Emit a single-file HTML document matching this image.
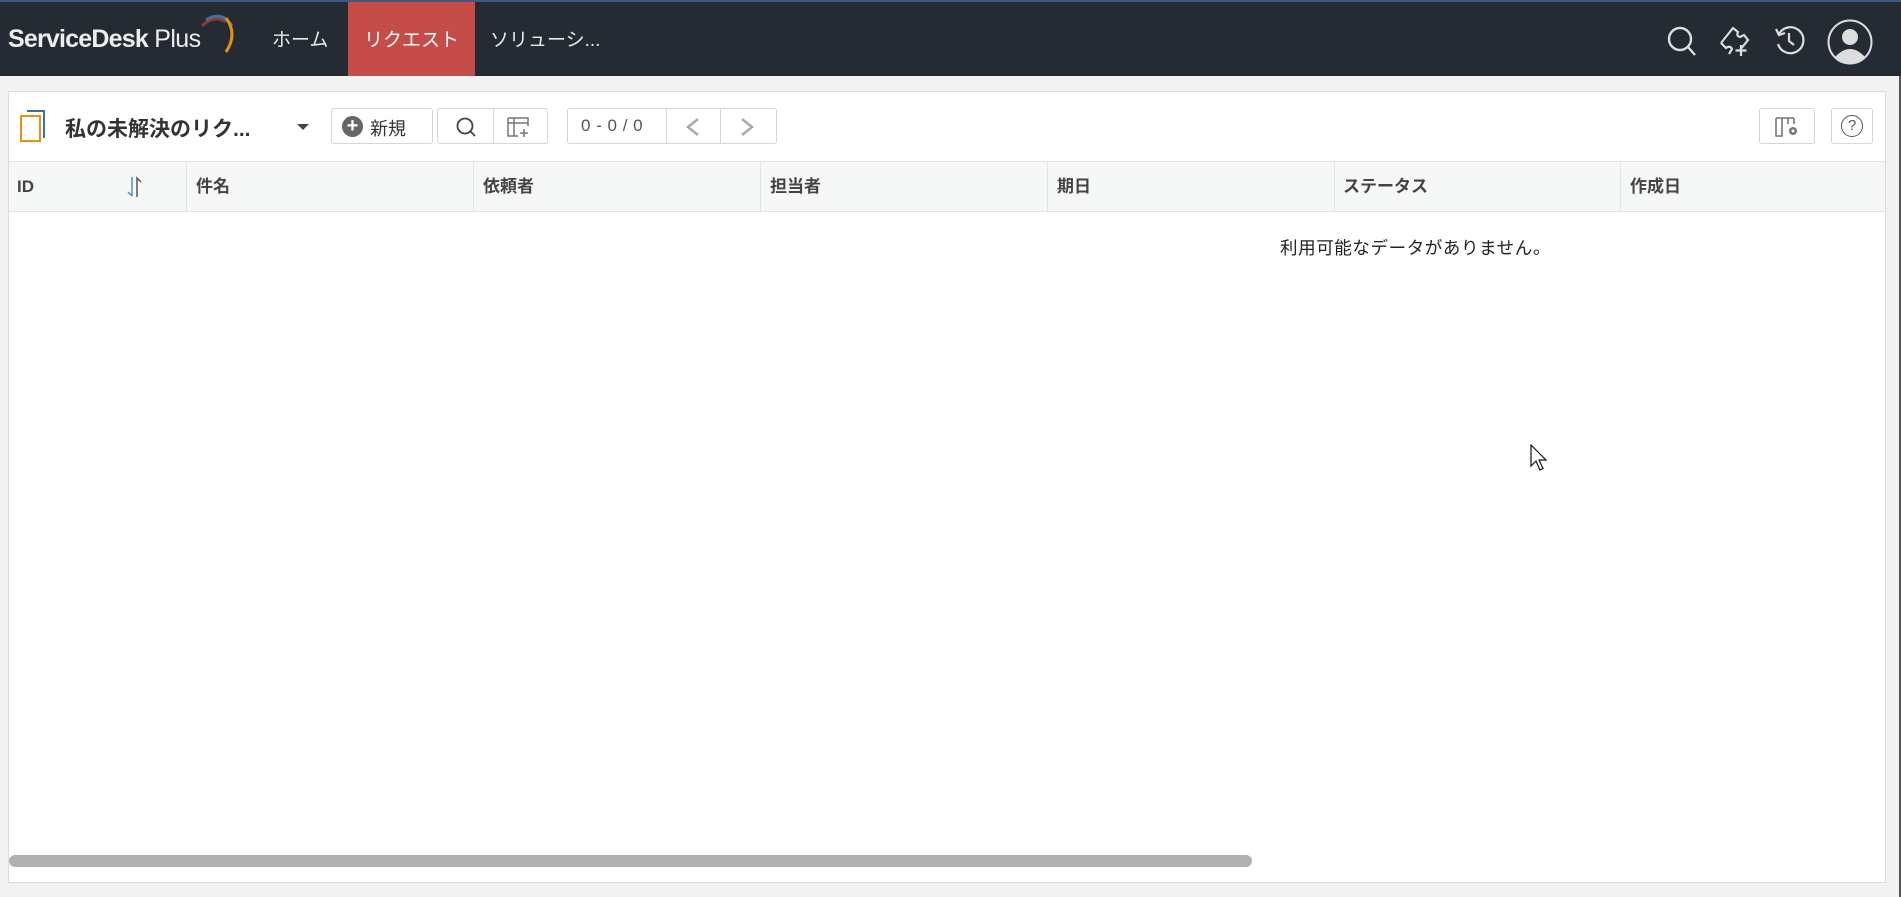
<!DOCTYPE html>
<html><head><meta charset="utf-8">
<style>
*{margin:0;padding:0;box-sizing:border-box}
body{width:1901px;height:897px;background:#f2f2f2;font-family:"Liberation Sans","Noto Sans CJK JP",sans-serif;position:relative;overflow:hidden}
.hdr{position:absolute;left:0;top:0;width:1901px;height:76px;background:#252b33;border-top:2px solid #3a5a8c}
.abs{position:absolute}
.nav{position:absolute;top:2px;height:74px;line-height:74px;color:#e8e8e8;font-size:19px}
.panel{position:absolute;left:8px;top:91px;width:1878px;height:792px;background:#fff;border:1px solid #dcdcdc}
.btn{position:absolute;border:1px solid #d6d6d6;border-radius:3px;background:#fff}
.th{position:absolute;top:0;height:50px;line-height:50px;font-size:17px;font-weight:bold;color:#444}
.col{position:absolute;top:0;width:1px;height:50px;background:#e2e4e4}
</style></head><body>
<div class="hdr">
  <div class="abs" style="left:8px;top:23px;font-size:25px;color:#eee;letter-spacing:-0.6px"><span style="font-weight:600;letter-spacing:-0.8px">ServiceDesk</span> Plus</div>
  <svg class="abs" style="left:196px;top:10px" width="44" height="42" viewBox="0 0 44 42"><path d="M6 14 Q18 2 30 10" stroke="#8a3a30" stroke-width="3" fill="none"/><path d="M10 8 Q26 -2 36 14" stroke="#3f6fa8" stroke-width="3" fill="none"/><path d="M30 6 Q42 22 30 40" stroke="#e8920c" stroke-width="3" fill="none"/></svg>
  <div class="nav" style="left:272px">ホーム</div>
  <div class="nav" style="left:348px;top:0;width:127px;background:#c64c49;text-align:center;color:#fff;line-height:78px">リクエスト</div>
  <div class="nav" style="left:490px">ソリューシ...</div>
  <svg class="abs" style="left:1666px;top:23px" width="32" height="34" viewBox="0 0 32 34"><circle cx="14" cy="14" r="11" stroke="#ddd" stroke-width="2.4" fill="none"/><path d="M22 22 L29 30" stroke="#ddd" stroke-width="2.4"/></svg>
  <svg class="abs" style="left:1718px;top:21px" width="36" height="36" viewBox="0 0 36 36" fill="none" stroke="#ddd" stroke-width="2.2"><path d="M3 20 L15 5 L20 9 Q18 13 22 14 L26 12 L30 17 L22 27 M3 20 L8 25 Q12 22 14 26 L11 31"/><path d="M23 22 V33 M17.5 27.5 H28.5"/></svg>
  <svg class="abs" style="left:1773px;top:22px" width="34" height="34" viewBox="0 0 34 34" fill="none" stroke="#ddd" stroke-width="2.2"><path d="M6 10 A13 13 0 1 1 5 20"/><path d="M3 5 L6 11 L12 9"/><path d="M16 9 V17 L21 21"/></svg>
  <svg class="abs" style="left:1827px;top:17px" width="46" height="46" viewBox="0 0 46 46"><circle cx="23" cy="23" r="21.5" stroke="#ddd" stroke-width="2" fill="none"/><circle cx="23" cy="18" r="8" fill="#ddd"/><path d="M8 38 Q23 22 38 38 Q23 50 8 38Z" fill="#ddd"/></svg>
</div>
<div class="abs" style="left:1899px;top:76px;width:2px;height:821px;background:#555"></div>
<div class="panel">
  <div class="abs" style="left:18px;top:18px;width:18px;height:28px;border:2.5px solid #3f6fa8;border-left:none;border-bottom:none"></div>
  <div class="abs" style="left:11px;top:23px;width:21px;height:27px;border:2.5px solid #e8920c;background:#fff"></div>
  <div class="abs" style="left:56px;top:21px;font-size:21px;font-weight:bold;color:#333">私の未解決のリク...</div>
  <div class="abs" style="left:288px;top:32px;width:0;height:0;border-left:6px solid transparent;border-right:6px solid transparent;border-top:6px solid #444"></div>
  <div class="btn" style="left:322px;top:16px;width:102px;height:36px"><div class="abs" style="left:10px;top:7px;width:21px;height:21px;border-radius:50%;background:#666;color:#fff;font-size:20px;line-height:20px;text-align:center;font-weight:bold">+</div><div class="abs" style="left:38px;top:6px;font-size:18px;color:#333">新規</div></div>
  <div class="btn" style="left:428px;top:16px;width:111px;height:36px"><div class="abs" style="left:55px;top:0;width:1px;height:34px;background:#d6d6d6"></div>
    <svg class="abs" style="left:17px;top:7px" width="22" height="22" viewBox="0 0 22 22"><circle cx="10" cy="10" r="7.5" stroke="#444" stroke-width="1.8" fill="none"/><path d="M15.5 15.5 L20 20" stroke="#444" stroke-width="1.8"/></svg>
    <svg class="abs" style="left:68px;top:7px" width="26" height="22" viewBox="0 0 26 22" fill="none" stroke="#777" stroke-width="1.5"><path d="M2 2 H22 V10 M2 2 V20 H12 M2 7 H22 M8 2 V20"/><path d="M18 13 V21 M14 17 H22"/></svg></div>
  <div class="btn" style="left:558px;top:16px;width:210px;height:36px"><div class="abs" style="left:98px;top:0;width:1px;height:34px;background:#d6d6d6"></div><div class="abs" style="left:152px;top:0;width:1px;height:34px;background:#d6d6d6"></div>
    <div class="abs" style="left:13px;top:7px;font-size:17px;color:#555;letter-spacing:0.5px">0 - 0 / 0</div>
    <svg class="abs" style="left:116px;top:8px" width="18" height="20" viewBox="0 0 18 20"><path d="M14 2 L4 10 L14 18" stroke="#aaa" stroke-width="2.5" fill="none"/></svg>
    <svg class="abs" style="left:170px;top:8px" width="18" height="20" viewBox="0 0 18 20"><path d="M4 2 L14 10 L4 18" stroke="#aaa" stroke-width="2.5" fill="none"/></svg></div>
  <div class="btn" style="left:1750px;top:16px;width:56px;height:36px"><svg class="abs" style="left:14px;top:7px" width="28" height="22" viewBox="0 0 28 22" fill="none" stroke="#777" stroke-width="1.6"><path d="M2 2 H20 M2 2 V20 H8 V2 M14 2 V8 M20 2 V8"/><circle cx="19" cy="15" r="4" fill="#777" stroke="none"/><circle cx="19" cy="15" r="1.5" fill="#fff" stroke="none"/></svg></div>
  <div class="btn" style="left:1822px;top:16px;width:42px;height:36px"><div class="abs" style="left:9px;top:6px;width:22px;height:22px;border:1.6px solid #555;border-radius:50%;text-align:center;line-height:19px;font-size:15px;color:#555">?</div></div>
  <div class="abs" style="left:0;top:69px;width:1876px;height:51px;background:#f6f8f8;border-top:1px solid #e2e4e4;border-bottom:1px solid #e2e4e4">
    <div class="th" style="left:8px">ID</div>
    <svg class="abs" style="left:116px;top:13px" width="20" height="24" viewBox="0 0 20 24"><path d="M7 2 V21 M3 17 L7 21" stroke="#4a90d0" stroke-width="1.5" fill="none"/><path d="M12 22 V3 L16 7" stroke="#555" stroke-width="1.5" fill="none"/></svg>
    <div class="col" style="left:177px"></div><div class="th" style="left:187px">件名</div>
    <div class="col" style="left:464px"></div><div class="th" style="left:474px">依頼者</div>
    <div class="col" style="left:751px"></div><div class="th" style="left:761px">担当者</div>
    <div class="col" style="left:1038px"></div><div class="th" style="left:1048px">期日</div>
    <div class="col" style="left:1325px"></div><div class="th" style="left:1334px">ステータス</div>
    <div class="col" style="left:1611px"></div><div class="th" style="left:1621px">作成日</div>
  </div>
  <div class="abs" style="left:1271px;top:143px;font-size:17.5px;color:#222;letter-spacing:0.6px">利用可能なデータがありません。</div>
  <div class="abs" style="left:0;top:763px;width:1243px;height:12px;border-radius:6px;background:#b0b0b0"></div>
</div>
<svg class="abs" style="left:1530px;top:444px" width="18" height="28" viewBox="0 0 18 28"><path d="M1 1 V22 L6 17 L10 26 L13 24.5 L9 16 H16 Z" fill="#fff" stroke="#111" stroke-width="1.2"/></svg>
</body></html>
